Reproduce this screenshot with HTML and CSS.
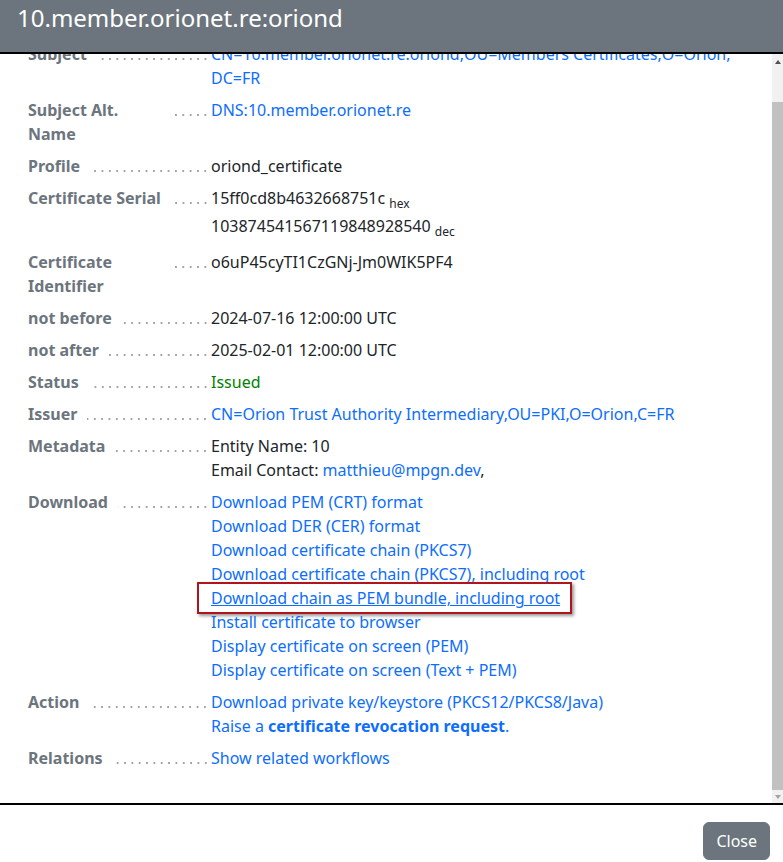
FILE: index.html
```html
<!DOCTYPE html>
<html lang="en">
<head>
<meta charset="utf-8">
<title>Certificate details</title>
<link rel="stylesheet" href="styles.css">
</head>
<body>
<div class="modal">
  <header class="modal-header">
    <h1 class="modal-title">10.member.orionet.re:oriond</h1>
  </header>
  <div class="modal-body">
    <div class="viewport">
      <dl class="details">
        <div class="row">
          <dt><span class="label">Subject</span><span class="dots"></span></dt>
          <dd><a href="#" class="link">CN=10.member.orionet.re:oriond,<wbr>OU=Members Certificates,<wbr>O=Orion,<wbr>DC=FR</a></dd>
        </div>
        <div class="row">
          <dt><span class="label">Subject Alt. Name</span><span class="dots"></span></dt>
          <dd><a href="#" class="link">DNS:10.member.orionet.re</a></dd>
        </div>
        <div class="row">
          <dt><span class="label">Profile</span><span class="dots"></span></dt>
          <dd>oriond_certificate</dd>
        </div>
        <div class="row">
          <dt><span class="label">Certificate Serial</span><span class="dots"></span></dt>
          <dd>
            <div class="serial-line">15ff0cd8b4632668751c <sub class="unit">hex</sub></div>
            <div class="serial-line">103874541567119848928540 <sub class="unit">dec</sub></div>
          </dd>
        </div>
        <div class="row">
          <dt><span class="label">Certificate Identifier</span><span class="dots"></span></dt>
          <dd>o6uP45cyTI1CzGNj-Jm0WIK5PF4</dd>
        </div>
        <div class="row">
          <dt><span class="label">not before</span><span class="dots"></span></dt>
          <dd>2024-07-16 12:00:00 UTC</dd>
        </div>
        <div class="row">
          <dt><span class="label">not after</span><span class="dots"></span></dt>
          <dd>2025-02-01 12:00:00 UTC</dd>
        </div>
        <div class="row">
          <dt><span class="label">Status</span><span class="dots"></span></dt>
          <dd class="status-ok">Issued</dd>
        </div>
        <div class="row">
          <dt><span class="label">Issuer</span><span class="dots"></span></dt>
          <dd><a href="#" class="link">CN=Orion Trust Authority Intermediary,OU=PKI,O=Orion,C=FR</a></dd>
        </div>
        <div class="row">
          <dt><span class="label">Metadata</span><span class="dots"></span></dt>
          <dd>
            <div>Entity Name: 10</div>
            <div>Email Contact: <a href="#" class="link">matthieu@mpgn.dev</a>,</div>
          </dd>
        </div>
        <div class="row">
          <dt><span class="label">Download</span><span class="dots"></span></dt>
          <dd>
            <div><a href="#" class="link">Download PEM (CRT) format</a></div>
            <div><a href="#" class="link">Download DER (CER) format</a></div>
            <div><a href="#" class="link">Download certificate chain (PKCS7)</a></div>
            <div><a href="#" class="link">Download certificate chain (PKCS7), including root</a></div>
            <div><span class="highlight"><a href="#" class="link link-hover">Download chain as PEM bundle, including root</a></span></div>
            <div><a href="#" class="link">Install certificate to browser</a></div>
            <div><a href="#" class="link">Display certificate on screen (PEM)</a></div>
            <div><a href="#" class="link">Display certificate on screen (Text + PEM)</a></div>
          </dd>
        </div>
        <div class="row">
          <dt><span class="label">Action</span><span class="dots"></span></dt>
          <dd>
            <div><a href="#" class="link">Download private key/keystore (PKCS12/PKCS8/Java)</a></div>
            <div><a href="#" class="link">Raise a <strong>certificate revocation request</strong>.</a></div>
          </dd>
        </div>
        <div class="row">
          <dt><span class="label">Relations</span><span class="dots"></span></dt>
          <dd><a href="#" class="link">Show related workflows</a></dd>
        </div>
      </dl>
    </div>
    <div class="scrollbar">
      <div class="sb-button"><span class="arrow-up"></span></div>
      <div class="sb-track"><div class="sb-thumb"></div></div>
      <div class="sb-button sb-button-down"><span class="arrow-down"></span></div>
    </div>
  </div>
  <footer class="modal-footer">
    <button type="button" class="btn">Close</button>
  </footer>
</div>
</body>
</html>
```

FILE: styles.css
```css
html, body {
  margin: 0;
  padding: 0;
}

body {
  width: 783px;
  height: 862px;
  overflow: hidden;
  background: #fff;
  font-family: "Noto Sans", "Open Sans", sans-serif;
  font-size: 16px;
  line-height: 24px;
  color: #212529;
}

.modal {
  display: flex;
  flex-direction: column;
  height: 862px;
}

.modal-header {
  height: 52px;
  background: #6c757d;
  border-bottom: 2px solid #000;
  padding: 0 16px 0 17px;
  flex: none;
}

.modal-title {
  margin: 0;
  padding-top: 2px;
  font-size: 24px;
  font-weight: 400;
  line-height: 32px;
  color: #fff;
  white-space: nowrap;
}

.modal-body {
  display: flex;
  height: 749px;
  flex: none;
}

.viewport {
  flex: 1;
  min-width: 0;
  overflow: hidden;
}

.details {
  margin: -12px 0 0;
  padding: 0 16px 0 28px;
}

.row {
  display: grid;
  grid-template-columns: 183px 1fr;
  margin-bottom: 8px;
}

.row dt {
  display: flex;
  align-items: baseline;
  padding-right: 2px;
  font-weight: 700;
  color: #6c757d;
}

.label {
  max-width: 135px;
}

.dots {
  flex: 1;
  min-width: 0;
  height: 2px;
  margin-left: 10px;
  background-image: radial-gradient(circle at center, #7d848b 0.55px, rgba(255, 255, 255, 0) 1.05px);
  background-size: 7.35px 2px;
  background-repeat: repeat-x;
  background-position: right bottom;
}

.row dd {
  margin: 0;
  min-width: 0;
}

.serial-line {
  padding-bottom: 4px;
}

.unit {
  font-size: 0.75em;
  vertical-align: sub;
  line-height: 1;
}

.status-ok {
  color: #008000;
}

.link {
  color: #0d6efd;
  text-decoration: none;
}

.link-hover {
  text-decoration: underline;
}

.highlight {
  display: inline-block;
  padding: 2px 10px 2px 12px;
  margin: -4px -12px -4px -14px;
  border: 2px solid #b0151d;
  box-shadow: 2px 2px 3px rgba(0, 0, 0, 0.4);
}

.scrollbar {
  width: 11px;
  flex: none;
  display: flex;
  flex-direction: column;
  background: #f1f1f1;
}

.sb-button {
  height: 15px;
  display: flex;
  align-items: center;
  justify-content: center;
  flex: none;
}

.sb-button-down {
  height: 13px;
}

.arrow-up {
  width: 0;
  height: 0;
  border-left: 3.5px solid transparent;
  border-right: 3.5px solid transparent;
  border-bottom: 4px solid #505050;
}

.arrow-down {
  width: 0;
  height: 0;
  border-left: 3.5px solid transparent;
  border-right: 3.5px solid transparent;
  border-top: 4px solid #a3a3a3;
}

.sb-track {
  flex: 1;
  display: flex;
  flex-direction: column;
  justify-content: flex-end;
}

.sb-thumb {
  height: 688px;
  background: #c1c1c1;
}

.modal-footer {
  flex: 1;
  display: flex;
  justify-content: flex-end;
  align-items: flex-start;
  border-top: 2px solid #000;
  padding: 17px 13px 0 0;
}

.btn {
  height: 38px;
  padding: 6px 12px;
  border: 1px solid #6c757d;
  border-radius: 6px;
  background: #6c757d;
  color: #fff;
  font-family: "Noto Sans", "Open Sans", sans-serif;
  font-size: 16px;
  line-height: 24px;
}
```
